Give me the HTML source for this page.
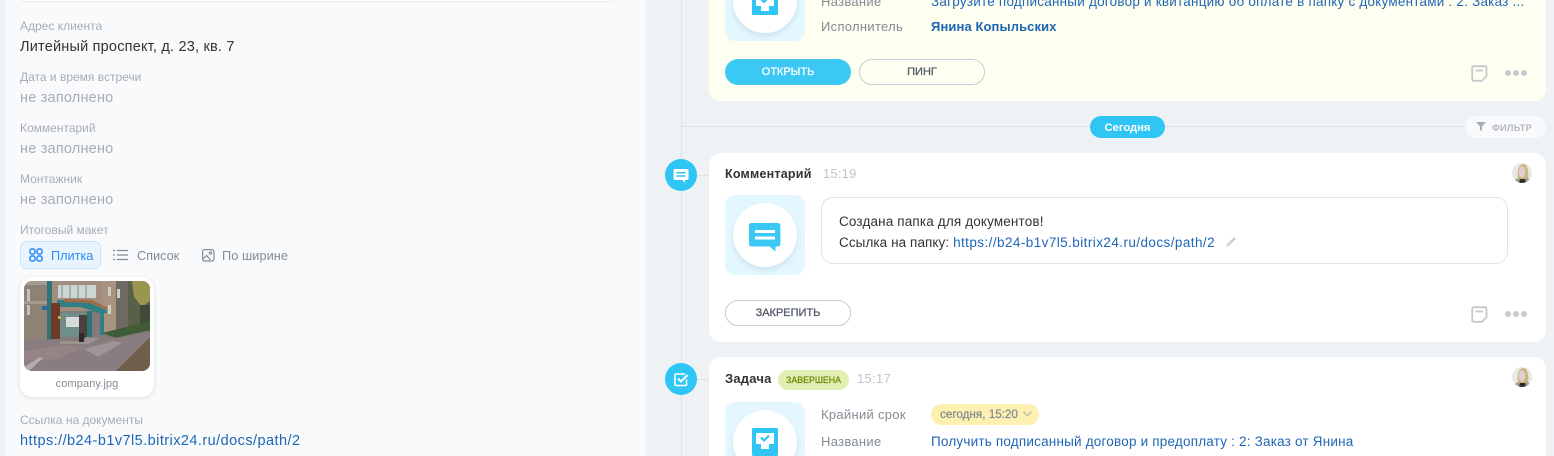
<!DOCTYPE html>
<html><head><meta charset="utf-8">
<style>
html,body{margin:0;padding:0;width:1554px;height:456px;overflow:hidden;background:#eef2f4}
body{position:relative;font-family:"Liberation Sans",sans-serif}
.a{position:absolute}
.t{position:absolute;white-space:nowrap;line-height:16px}
.lab{font-size:12px;color:#a8adb4}
.val{font-size:14.5px;color:#333;letter-spacing:.2px}
.emp{font-size:14.5px;color:#a8adb4;letter-spacing:.2px}
.link{color:#1f66b5}
.k{font-size:13px;color:#828b95;letter-spacing:.3px}
.btn{position:absolute;box-sizing:border-box;width:126px;height:26px;border-radius:13px;text-align:center;font-size:11px;-webkit-text-stroke:.3px currentColor;line-height:25px;color:#535c69;border:1px solid #c6cdd3}
.card{position:absolute;left:709px;width:837px;border-radius:12px;background:#fff}
.tile{position:absolute;left:725px;width:80px;height:80px;border-radius:10px;background:#e5f7fe;overflow:hidden}
.circ{position:absolute;left:8px;top:8px;width:64px;height:64px;border-radius:50%;background:#fff;box-shadow:0 3px 6px rgba(60,130,160,.16)}
.nod{position:absolute;left:665px;width:32px;height:32px;border-radius:50%;background:#2fc6f6}
.av{position:absolute;left:1512px;width:20px;height:20px;border-radius:50%}
.tab{font-size:12.7px;color:#828b95}
</style></head><body>
<div class="a" style="left:5px;top:0;width:641px;height:456px;background:#f9fafc"></div>
<div class="a" style="left:20px;top:-10px;width:596px;height:12px;background:#fff;border:1px solid #e8ebee;border-radius:8px;box-sizing:border-box"></div>

<div class="t lab" style="left:20px;top:18px">Адрес клиента</div>
<div class="t val" style="left:20px;top:39px">Литейный проспект, д. 23, кв. 7</div>
<div class="t lab" style="left:20px;top:69px">Дата и время встречи</div>
<div class="t emp" style="left:20px;top:90px">не заполнено</div>
<div class="t lab" style="left:20px;top:120px">Комментарий</div>
<div class="t emp" style="left:20px;top:141px">не заполнено</div>
<div class="t lab" style="left:20px;top:171px">Монтажник</div>
<div class="t emp" style="left:20px;top:192px">не заполнено</div>
<div class="t lab" style="left:20px;top:222px">Итоговый макет</div>

<div class="a" style="left:20px;top:241px;width:81px;height:28px;box-sizing:border-box;background:#e8f5ff;border:1px solid #c4e5fb;border-radius:7px"></div>
<svg class="a" style="left:29px;top:248px" width="14" height="14" viewBox="0 0 14 14" fill="none" stroke="#2f8df0" stroke-width="1.500"><rect x="1" y="1" width="5" height="5" rx="1.800"/><rect x="8" y="1" width="5" height="5" rx="1.800"/><rect x="1" y="8" width="5" height="5" rx="1.800"/><rect x="8" y="8" width="5" height="5" rx="1.800"/></svg>
<div class="t tab" style="left:51px;top:248px;color:#2f8df0">Плитка</div>
<svg class="a" style="left:113px;top:249px" width="15" height="12" viewBox="0 0 15 12" stroke="#828b95" stroke-width="1.200"><path d="M4 1.500h11M4 6h11M4 10.500h11"/><path d="M0 1.500h2M0 6h2M0 10.500h2"/></svg>
<div class="t tab" style="left:137px;top:248px">Список</div>
<svg class="a" style="left:202px;top:249px" width="13" height="13" viewBox="0 0 13 13" fill="none" stroke="#828b95" stroke-width="1.200"><rect x=".6" y=".6" width="11.400" height="11.400" rx="2"/><circle cx="8.500" cy="4" r="1.200"/><path d="M1 10l3.500-3.500 4 4.500"/></svg>
<div class="t tab" style="left:222px;top:248px;letter-spacing:.1px">По ширине</div>

<div class="a" style="left:20px;top:277px;width:134px;height:120px;background:#fff;border-radius:12px;box-shadow:0 1px 4px rgba(0,0,0,.12)"></div>
<svg class="a" style="left:24px;top:281px;border-radius:8px" width="126" height="90" viewBox="0 0 126 90">
<rect width="126" height="90" fill="#85797a"/>
<rect x="0" y="0" width="24" height="60" fill="#8e8277"/>
<path d="M0 0h24v4H0zM0 20h24v3H0z" fill="#a59a8e"/>
<rect x="28" y="0" width="50" height="30" fill="#a18d7d"/>
<rect x="78" y="0" width="26" height="52" fill="#a89280"/>
<path d="M92 0h15v50H92z" fill="#6e6a62"/>
<rect x="104" y="0" width="22" height="50" fill="#59604a"/>
<path d="M108 0h18v20l-8 6-8-10z" fill="#9a9550"/>
<path d="M116 24h10v18h-10z" fill="#3f4a3a"/>
<rect x="34" y="4" width="38" height="13" fill="#cdd5d2"/>
<path d="M38 4v13M46 4v13M54 4v13M62 4v13" stroke="#7d8a86" stroke-width="1"/>
<path d="M84 6h3v9h-3zM93 8h3v9h-3zM84 24h3v9h-3z" fill="#cfcfc6"/>
<rect x="36" y="32" width="26" height="24" fill="#6f8d8a"/>
<rect x="42" y="36" width="14" height="10" fill="#d7dcd8"/>
<path d="M33 19h25l25 10v3l-5 1-22-7H33z" fill="#2f7f83"/>
<path d="M40 18l28 1 16 8-2 1-16-6-26-1z" fill="#a06a48"/>
<rect x="23" y="0" width="5" height="62" fill="#2d7479"/>
<rect x="27" y="22" width="9" height="36" fill="#6e3a26"/>
<rect x="63" y="30" width="5" height="30" fill="#2d7479"/>
<rect x="76" y="30" width="4" height="24" fill="#2f7f83"/>
<rect x="55" y="34" width="8" height="24" fill="#4a403c"/>
<path d="M78 52l48-12v9l-34 8z" fill="#3f5c36"/>
<path d="M0 60l24-2 12 4h24l20-4 28-3 18-3v38H0z" fill="#8a7d7f"/>
<path d="M36 60h22l4-4 14 1-12 6H36z" fill="#9a928f"/>
<path d="M0 70l40-6 20 2-26 12-34 2z" fill="#948486"/>
<path d="M60 68l30-8 8 2-24 14z" fill="#a19496"/>
<path d="M92 90l34-34v34z" fill="#6f5f4a"/>
<path d="M0 86l16-10 3 1-14 13H0z" fill="#b4adad"/>
<rect x="55" y="52" width="5" height="9" fill="#2c2a2c"/>
<rect x="34" y="35" width="3" height="3" fill="#c9b43a"/>
<rect x="18" y="25" width="5" height="4" fill="#3265a8"/>
<path d="M3 8h3v12H3zM3 24h3v10H3z" fill="#c2c4c3"/>
</svg>
<div class="t" style="left:20px;width:134px;text-align:center;top:376px;font-size:11px;color:#828b95;letter-spacing:.1px">company.jpg</div>

<div class="t lab" style="left:20px;top:412px">Ссылка на документы</div>
<div class="t link" style="left:20px;top:433px;font-size:14.5px;letter-spacing:.44px">https://b24-b1v7l5.bitrix24.ru/docs/path/2</div>

<!-- timeline -->
<div class="a" style="left:681px;top:0;width:1px;height:456px;background:#dfe3e7"></div>
<div class="a" style="left:681px;top:126px;width:790px;height:1px;background:#dfe3e7"></div>
<div class="a" style="left:681px;top:175px;width:30px;height:1px;background:#dfe3e7"></div>
<div class="a" style="left:681px;top:379px;width:30px;height:1px;background:#dfe3e7"></div>

<!-- yellow card -->
<div class="card" style="top:-30px;height:131px;background:#fefff0"></div>
<div class="tile" style="top:-39px">
 <div class="circ"></div>
</div>
<svg class="a" style="left:751px;top:0" width="28" height="16" viewBox="0 0 28 16"><path d="M1 -12h25a1 1 0 0 1 1 1V14a1 1 0 0 1-1 1H2a1 1 0 0 1-1-1z" fill="#2fc6f6"/><path d="M5 -5h18V6h-5v5h-8V6H5z" fill="#fff"/><path d="M10 -1l3 3 5-5" stroke="#2fc6f6" stroke-width="2.200" fill="none"/></svg>
<div class="t k" style="left:821px;top:-6px">Название</div>
<div class="t link" style="left:931px;top:-6px;font-size:13.5px;letter-spacing:.22px">Загрузите подписанный договор и квитанцию об оплате в папку с документами : 2: Заказ ...</div>
<div class="t k" style="left:821px;top:19px">Исполнитель</div>
<div class="t link" style="left:931px;top:19px;font-size:13px;font-weight:bold;letter-spacing:.1px">Янина Копыльских</div>
<div class="btn" style="left:725px;top:59px;background:#3bc8f5;border:0;color:#fff;line-height:26px">ОТКРЫТЬ</div>
<div class="btn" style="left:859px;top:59px">ПИНГ</div>
<svg class="a" style="left:1471px;top:65px" width="17" height="17" viewBox="0 0 17 17" fill="none" stroke="#c5c9ce" stroke-width="1.800"><path d="M15.500 11V2.500a1.300 1.300 0 0 0-1.300-1.300H2.500A1.300 1.300 0 0 0 1.200 2.500v12a1.300 1.300 0 0 0 1.300 1.300H11z"/><path d="M4.500 5.500h7.500"/></svg>
<svg class="a" style="left:1505px;top:69px" width="22" height="8" viewBox="0 0 22 8" fill="#c5c9ce"><circle cx="3" cy="4" r="3"/><circle cx="11" cy="4" r="3"/><circle cx="19" cy="4" r="3"/></svg>

<!-- today -->
<div class="a" style="left:1090px;top:116px;width:75px;height:22px;border-radius:11px;background:#2fc6f6;color:#fff;font-size:11.200px;font-weight:bold;line-height:24px;text-align:center">Сегодня</div>
<div class="a" style="left:1465px;top:116px;width:81px;height:22px;border-radius:11px;background:#f9fafb"></div>
<svg class="a" style="left:1476px;top:122px" width="10" height="9" viewBox="0 0 10 9"><path d="M0 0h10L6 4.500V9L4 8V4.500z" fill="#a8adb4"/></svg>
<div class="t" style="left:1492px;top:120px;font-size:9.200px;font-weight:bold;color:#b4b8bd;letter-spacing:.3px">ФИЛЬТР</div>

<!-- comment card -->
<div class="card" style="top:153px;height:189px"></div>
<div class="nod" style="top:159px"></div>
<svg class="a" style="left:673px;top:168px" width="16" height="16" viewBox="0 0 16 16"><path d="M2 1h12a1.500 1.500 0 0 1 1.500 1.500v8A1.500 1.500 0 0 1 14 12h-2v3l-2.500-3H2A1.500 1.500 0 0 1 .5 10.500v-8A1.500 1.500 0 0 1 2 1z" fill="#fff"/><path d="M3.500 4.800h9M3.500 8h9" stroke="#2fc6f6" stroke-width="1.500"/></svg>
<div class="t" style="left:725px;top:166px;font-size:12.500px;font-weight:bold;color:#333;letter-spacing:.22px">Комментарий</div>
<div class="t" style="left:823px;top:166px;font-size:13px;color:#c0c4c9;letter-spacing:.2px">15:19</div>
<svg class="av" style="top:163px" viewBox="0 0 20 20"><defs><clipPath id="c1"><circle cx="10" cy="10" r="10"/></clipPath></defs><g clip-path="url(#c1)"><rect width="20" height="20" fill="#e6e8e6"/><path d="M6 18C5 9 6 2 11 1c5 0 6 8 5 17z" fill="#cdb67f"/><ellipse cx="10" cy="9" rx="3.200" ry="5.500" fill="#e3cfd0"/><path d="M1 20l3-4 3-1 3 2 4-2 3 1 2 4z" fill="#9ea58a"/><path d="M7 20l1-4h5l1 4z" fill="#2c2e2c"/></g></svg>
<div class="tile" style="top:195px"><div class="circ"></div></div>
<svg class="a" style="left:749px;top:223px" width="32" height="29" viewBox="0 0 32 29"><path d="M2.500 0h27A2.500 2.500 0 0 1 32 2.500V21.500a2.500 2.500 0 0 1-2.500 2.500H27v5l-6-5H2.500A2.500 2.500 0 0 1 0 21.500V2.500A2.500 2.500 0 0 1 2.500 0z" transform="scale(.98,.98)" fill="#3bc8f5"/><path d="M6 8.500h20M6 15h20" stroke="#fff" stroke-width="3"/></svg>
<div class="a" style="left:821px;top:197px;width:687px;height:67px;box-sizing:border-box;border:1px solid #e2e5e8;border-radius:12px"></div>
<div class="t" style="left:839px;top:214px;font-size:13.5px;color:#333;letter-spacing:.15px">Создана папка для документов!</div>
<div class="t" style="left:839px;top:235px;font-size:13.5px;color:#333;letter-spacing:.08px">Ссылка на папку: <span class="link" style="letter-spacing:.43px">https://b24-b1v7l5.bitrix24.ru/docs/path/2</span></div>
<svg class="a" style="left:1226px;top:236px" width="11" height="11" viewBox="0 0 11 11"><path d="M0 11l1-3L8 1l2 2-7 7z" fill="#cfd2d5"/></svg>
<div class="btn" style="left:725px;top:300px">ЗАКРЕПИТЬ</div>
<svg class="a" style="left:1471px;top:306px" width="17" height="17" viewBox="0 0 17 17" fill="none" stroke="#c5c9ce" stroke-width="1.800"><path d="M15.500 11V2.500a1.300 1.300 0 0 0-1.300-1.300H2.500A1.300 1.300 0 0 0 1.200 2.500v12a1.300 1.300 0 0 0 1.300 1.300H11z"/><path d="M4.500 5.500h7.500"/></svg>
<svg class="a" style="left:1505px;top:310px" width="22" height="8" viewBox="0 0 22 8" fill="#c5c9ce"><circle cx="3" cy="4" r="3"/><circle cx="11" cy="4" r="3"/><circle cx="19" cy="4" r="3"/></svg>

<!-- task card -->
<div class="card" style="top:357px;height:99px;border-radius:12px 12px 0 0"></div>
<div class="nod" style="top:363px"></div>
<svg class="a" style="left:674px;top:372px" width="15" height="15" viewBox="0 0 15 15" fill="none" stroke="#fff" stroke-width="1.600"><path d="M12.500 7.500v5a1 1 0 0 1-1 1h-9.500a1 1 0 0 1-1-1V3a1 1 0 0 1 1-1h9"/><path d="M4 6.500l3 3 6.500-6.500" stroke-width="2"/></svg>
<div class="t" style="left:725px;top:371px;font-size:13px;font-weight:bold;color:#333;letter-spacing:.2px">Задача</div>
<div class="a" style="left:778px;top:370px;width:71px;height:20px;border-radius:10px;background:#e2efb4;color:#6b8a00;font-size:8.800px;-webkit-text-stroke:.25px currentColor;line-height:21px;text-align:center">ЗАВЕРШЕНА</div>
<div class="t" style="left:857px;top:371px;font-size:13px;color:#c0c4c9;letter-spacing:.3px">15:17</div>
<svg class="av" style="top:367px" viewBox="0 0 20 20"><defs><clipPath id="c2"><circle cx="10" cy="10" r="10"/></clipPath></defs><g clip-path="url(#c2)"><rect width="20" height="20" fill="#e6e8e6"/><path d="M6 18C5 9 6 2 11 1c5 0 6 8 5 17z" fill="#cdb67f"/><ellipse cx="10" cy="9" rx="3.200" ry="5.500" fill="#e3cfd0"/><path d="M1 20l3-4 3-1 3 2 4-2 3 1 2 4z" fill="#9ea58a"/><path d="M7 20l1-4h5l1 4z" fill="#2c2e2c"/></g></svg>
<div class="tile" style="top:402px;height:54px;border-radius:10px 10px 0 0"><div class="circ"></div></div>
<svg class="a" style="left:751px;top:428px" width="28" height="28" viewBox="0 0 28 28"><rect x="1" y="0" width="26" height="28" rx="1.500" fill="#2fc6f6"/><path d="M5 5h18v11h-5v5h-8v-5H5z" fill="#fff"/><path d="M10 9.500l3 3 5-5" stroke="#2fc6f6" stroke-width="2.200" fill="none"/></svg>
<div class="t k" style="left:821px;top:407px">Крайний срок</div>
<div class="a" style="left:931px;top:404px;width:108px;height:21px;border-radius:11px;background:#fdf0b0"></div>
<div class="t" style="left:940px;top:407px;font-size:11.700px;-webkit-text-stroke:.25px #828b95;color:#828b95">сегодня, 15:20</div>
<svg class="a" style="left:1023px;top:411px" width="9" height="6" viewBox="0 0 9 6" fill="none" stroke="#b5b9a5" stroke-width="1.200"><path d="M.5 .8l4 4 4-4"/></svg>
<div class="t k" style="left:821px;top:434px">Название</div>
<div class="t link" style="left:931px;top:434px;font-size:13.5px;letter-spacing:.2px">Получить подписанный договор и предоплату : 2: Заказ от Янина</div>
</body></html>
